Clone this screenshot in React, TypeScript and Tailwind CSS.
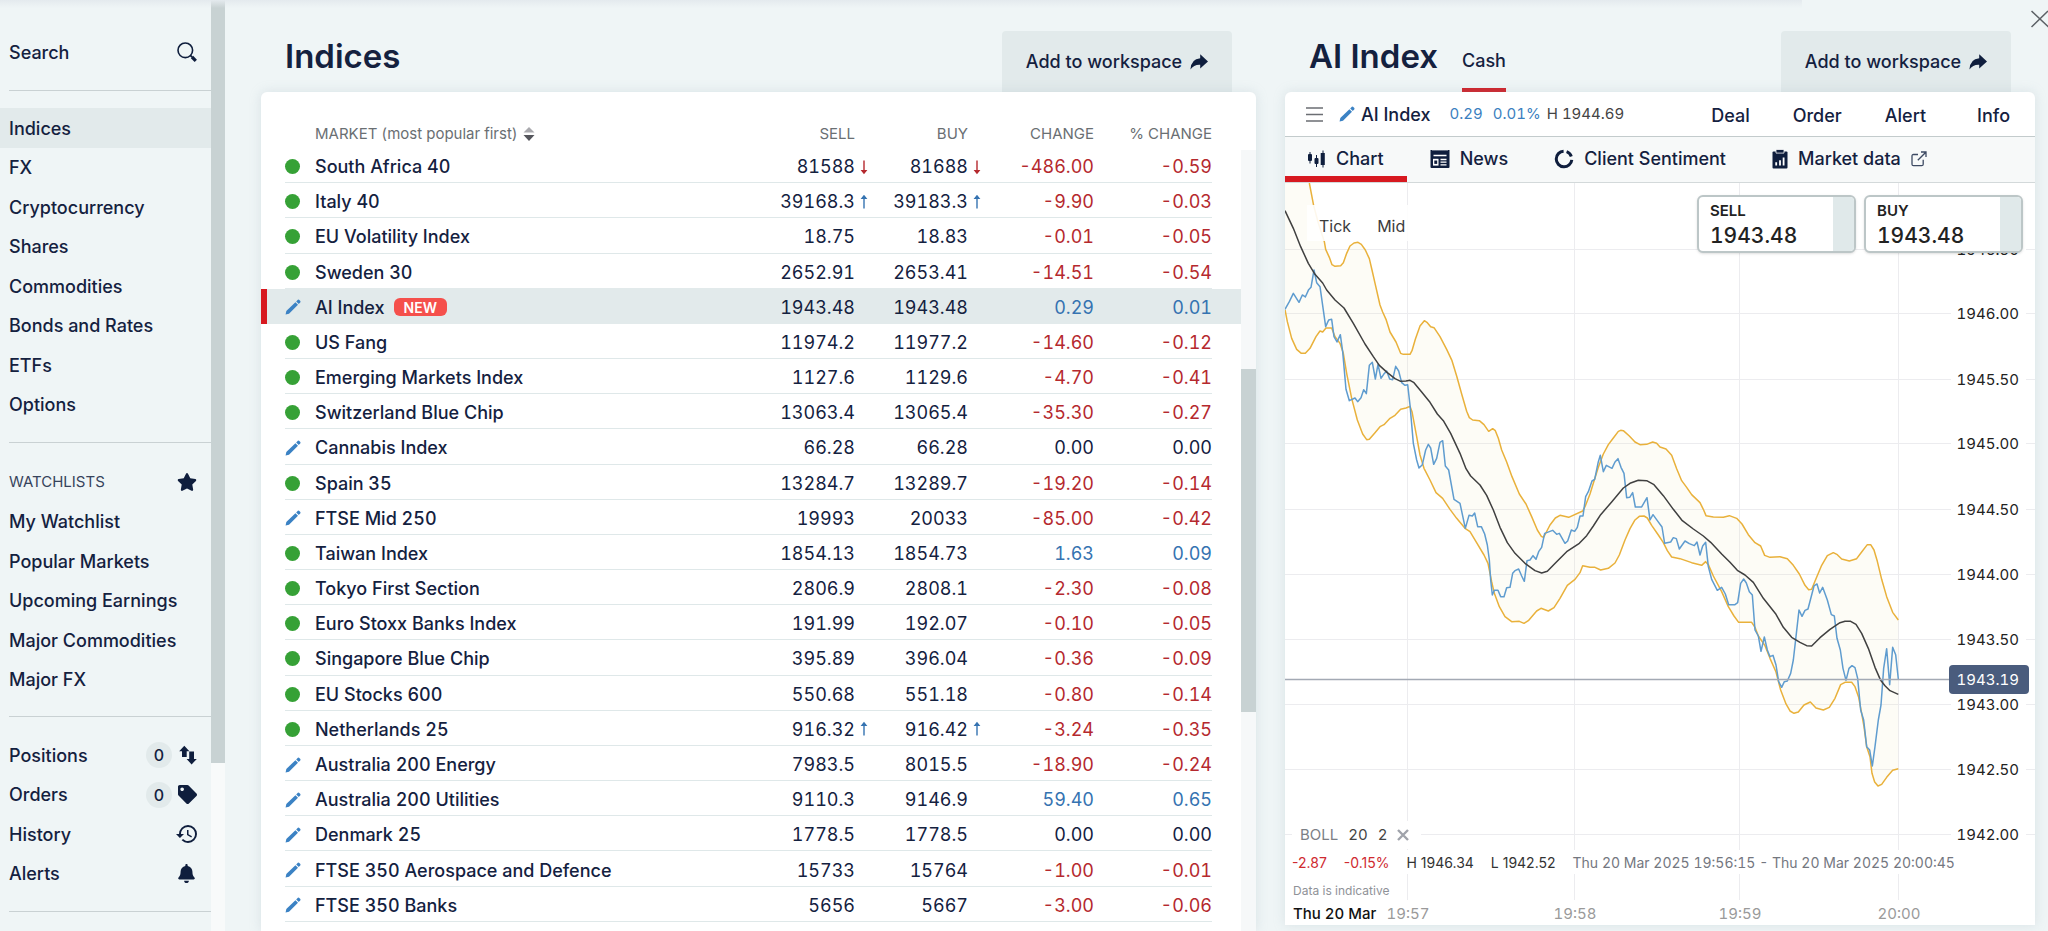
import type {ReactNode} from "react";
import clsx from "clsx";
import {FaBell, FaStar, FaTag} from "react-icons/fa";
import {MdHistory} from "react-icons/md";

type Market = {
    name: string;
    open: boolean;
    sell: string;
    buy: string;
    change: string;
    pct: string;
    move?: "up" | "down";
    isNew?: boolean;
};

const markets: Market[] = [
    {name: "South Africa 40", open: true, sell: "81588", buy: "81688", change: "-486.00", pct: "-0.59", move: "down"},
    {name: "Italy 40", open: true, sell: "39168.3", buy: "39183.3", change: "-9.90", pct: "-0.03", move: "up"},
    {name: "EU Volatility Index", open: true, sell: "18.75", buy: "18.83", change: "-0.01", pct: "-0.05"},
    {name: "Sweden 30", open: true, sell: "2652.91", buy: "2653.41", change: "-14.51", pct: "-0.54"},
    {name: "AI Index", open: false, sell: "1943.48", buy: "1943.48", change: "0.29", pct: "0.01", isNew: true},
    {name: "US Fang", open: true, sell: "11974.2", buy: "11977.2", change: "-14.60", pct: "-0.12"},
    {name: "Emerging Markets Index", open: true, sell: "1127.6", buy: "1129.6", change: "-4.70", pct: "-0.41"},
    {name: "Switzerland Blue Chip", open: true, sell: "13063.4", buy: "13065.4", change: "-35.30", pct: "-0.27"},
    {name: "Cannabis Index", open: false, sell: "66.28", buy: "66.28", change: "0.00", pct: "0.00"},
    {name: "Spain 35", open: true, sell: "13284.7", buy: "13289.7", change: "-19.20", pct: "-0.14"},
    {name: "FTSE Mid 250", open: false, sell: "19993", buy: "20033", change: "-85.00", pct: "-0.42"},
    {name: "Taiwan Index", open: true, sell: "1854.13", buy: "1854.73", change: "1.63", pct: "0.09"},
    {name: "Tokyo First Section", open: true, sell: "2806.9", buy: "2808.1", change: "-2.30", pct: "-0.08"},
    {name: "Euro Stoxx Banks Index", open: true, sell: "191.99", buy: "192.07", change: "-0.10", pct: "-0.05"},
    {name: "Singapore Blue Chip", open: true, sell: "395.89", buy: "396.04", change: "-0.36", pct: "-0.09"},
    {name: "EU Stocks 600", open: true, sell: "550.68", buy: "551.18", change: "-0.80", pct: "-0.14"},
    {name: "Netherlands 25", open: true, sell: "916.32", buy: "916.42", change: "-3.24", pct: "-0.35", move: "up"},
    {name: "Australia 200 Energy", open: false, sell: "7983.5", buy: "8015.5", change: "-18.90", pct: "-0.24"},
    {name: "Australia 200 Utilities", open: false, sell: "9110.3", buy: "9146.9", change: "59.40", pct: "0.65"},
    {name: "Denmark 25", open: false, sell: "1778.5", buy: "1778.5", change: "0.00", pct: "0.00"},
    {name: "FTSE 350 Aerospace and Defence", open: false, sell: "15733", buy: "15764", change: "-1.00", pct: "-0.01"},
    {name: "FTSE 350 Banks", open: false, sell: "5656", buy: "5667", change: "-3.00", pct: "-0.06"},
];

const categories = ["Indices", "FX", "Cryptocurrency", "Shares", "Commodities", "Bonds and Rates", "ETFs", "Options"];
const watchlists = ["My Watchlist", "Popular Markets", "Upcoming Earnings", "Major Commodities", "Major FX"];

function valueColor(value: string) {
    if (value.startsWith("-")) return "text-[#b5292e]";
    if (Number(value) > 0) return "text-[#3573b1]";
    return "";
}

function PencilIcon() {
    return (
        <svg viewBox="0 0 16 16" className="size-4 shrink-0" fill="#3b82c4">
            <path d="M0.6 15.4 1.3 11.9 10.4 3.2 13 5.8 4 14.7Z"/>
            <path d="M11.2 2.4 12.9 0.8Q13.6 0.3 14.3 0.9L15.3 1.9Q15.8 2.6 15.3 3.3L13.8 5Z"/>
        </svg>
    );
}

function SearchIcon() {
    return (
        <svg viewBox="0 0 20 20" className="size-5" fill="none" stroke="#0f1e3d">
            <circle cx="8.3" cy="8.3" r="7.3" strokeWidth="1.6"/>
            <path d="m13.6 13.6 1.6 1.6" strokeWidth="1.8"/>
            <path d="m15 15 3.8 3.8" strokeWidth="3.2"/>
        </svg>
    );
}

function ShareIcon() {
    return (
        <svg viewBox="0 0 18 16" className="h-4 w-[18px]" fill="#0f1e3d">
            <path d="M10.2.2 18 7.4l-7.8 7.2v-3.8Q4 10.4.4 15.6 1 4.8 10.2 4.2Z"/>
        </svg>
    );
}

function PositionsIcon() {
    return (
        <svg viewBox="0 0 18 20" className="h-5 w-[18px]" fill="#0f1e3d">
            <path d="M5.3.8 10.4 6.2H7.7V12H3V6.2H.2Z"/>
            <path d="M12.6 19.4 7.6 14h2.6V6.6h4.8V14h2.8Z"/>
        </svg>
    );
}

function CandlesIcon() {
    return (
        <svg viewBox="0 0 18 18" className="size-[18px]" fill="#0f1e3d">
            <path d="M1.5 2h1v2H3q1 0 1 1v5q0 1-1 1h-.5v2.5h-1V11H1q-1 0-1-1V5q0-1 1-1h.5z"/>
            <path d="M8 5h1v3h.5q1 0 1 1v4q0 1-1 1H9v3H8v-3h-.5q-1 0-1-1V9q0-1 1-1H8z"/>
            <path d="M14.5.5h1V3h1.3v12h-1.3v2.5h-1V15h-1.8V3h1.8z"/>
        </svg>
    );
}

function NewsIcon() {
    return (
        <svg viewBox="0 0 20 20" className="size-5" fill="#0f1e3d">
            <path d="M.5 1h1.5l1 .8L4 1l1 .8L6 1l1 .8L8 1l1 .8 1-.8 1 .8 1-.8 1 .8 1-.8 1 .8 1-.8 1 .8 1-.8h1.5v17q0 1-1 1h-17q-1 0-1-1z"/>
            <path d="M3.5 6.5h13M10.5 10.5h6M10.5 13.2h6M10.5 15.9h6" stroke="#fff" strokeWidth="1.3"/>
            <path d="M3 9.8h5.5v6.8H3z" fill="#fff"/>
            <path d="M4.3 11.5h2.9v3.4H4.3z"/>
        </svg>
    );
}

function SentimentIcon() {
    return (
        <svg viewBox="0 0 20 20" className="size-5" fill="none" stroke="#0f1e3d" strokeWidth="3">
            <path d="M9.6 2.2A7.8 7.8 0 1 0 17.8 10.8"/>
            <path d="M12.6 2.6A7.8 7.8 0 0 1 17.3 7.4"/>
        </svg>
    );
}

function MarketDataIcon() {
    return (
        <svg viewBox="0 0 16 20" className="h-5 w-4" fill="#0f1e3d">
            <path d="M1.5 2.5h13q1 0 1 1v15q0 1-1 1h-13q-1 0-1-1v-15q0-1 1-1z"/>
            <path d="M4 .5h8v3.6H4z" stroke="#f7f9f9" strokeWidth=".8"/>
            <path d="M4.2 16.5v-3.2M8 16.5v-5.2M11.6 16.5V8.6" stroke="#fff" strokeWidth="1.8"/>
        </svg>
    );
}

function ExternalIcon() {
    return (
        <svg viewBox="0 0 16 16" className="size-4" fill="none" stroke="#3d4a63" strokeWidth="1.3">
            <path d="M7 3.5H2.5Q1 3.5 1 5v8.2q0 1.5 1.5 1.5h8.2q1.5 0 1.5-1.5V8.8"/>
            <path d="M6.8 9.2 14.8 1.2M10 1h5v5"/>
        </svg>
    );
}

function Arrow({move}: { move?: "up" | "down" }) {
    return (
        <span className="flex w-4 justify-end pr-[2px]">
            {move && (
                <svg viewBox="0 0 10 16" className={clsx("h-4 w-[10px]", move === "down" && "rotate-180")}
                     fill={move === "up" ? "#3573b1" : "#b5292e"}>
                    <path d="M5 .8 8.4 5H5.7v9.5H4.3V5H1.6Z"/>
                </svg>
            )}
        </span>
    );
}

function NavItem({label, active, children}: { label: string; active?: boolean; children?: ReactNode }) {
    return (
        <a href="#" className={clsx("flex items-center justify-between pl-[9px] pr-3 pt-px", active && "bg-[#e2eaeb]")}>
            {label}
            {children && <span className="flex items-center gap-[2px]">{children}</span>}
        </a>
    );
}

function Count({value}: { value: number }) {
    return (
        <span className="flex size-[26px] items-center justify-center rounded-full bg-[#e2eaeb] text-base">{value}</span>
    );
}

function Sidebar() {
    return (
        <aside className="flex w-[225px] shrink-0 text-[18px] font-medium">
            <div className="flex-1">
                <div className="ml-[9px] flex h-[91px] items-center justify-between border-b border-[#c9d1d3] pr-[13px] pt-[14px]">
                    <input type="text" aria-label="Search" placeholder="Search"
                           className="w-36 outline-none placeholder:text-[#14213f]"/>
                    <button type="button" aria-label="Run search" className="mr-px"><SearchIcon/></button>
                </div>
                <nav className="mt-[17px] grid h-[316px] auto-rows-fr">
                    {categories.map((c) => <NavItem key={c} label={c} active={c === "Indices"}/>)}
                </nav>
                <div className="ml-[9px] mt-[18px] border-t border-[#c9d1d3]"/>
                <nav className="mt-[19px] grid h-[237px] auto-rows-fr">
                    <div className="flex items-center justify-between pl-[9px] pr-[14px] text-[15px] font-normal text-[#37435c]">
                        WATCHLISTS
                        <FaStar className="size-5 text-[#0f1e3d]"/>
                    </div>
                    {watchlists.map((w) => <NavItem key={w} label={w}/>)}
                </nav>
                <div className="ml-[9px] mt-[17px] border-t border-[#c9d1d3]"/>
                <nav className="mt-[18px] grid h-[158px] auto-rows-fr">
                    <NavItem label="Positions"><Count value={0}/><span className="w-[25px] pl-[5px]"><PositionsIcon/></span></NavItem>
                    <NavItem label="Orders"><Count value={0}/><span className="w-[25px] pl-1"><FaTag className="size-[19px] text-[#0f1e3d]"/></span></NavItem>
                    <NavItem label="History"><MdHistory className="size-6 text-[#0f1e3d]"/></NavItem>
                    <NavItem label="Alerts"><FaBell className="mr-[3px] size-[19px] text-[#0f1e3d]"/></NavItem>
                </nav>
                <div className="ml-[9px] mt-[18px] border-t border-[#c9d1d3]"/>
            </div>
            <div className="w-[14px] bg-[#f8fafa]">
                <div className="h-[82%] bg-[#c8d2d3]"/>
            </div>
        </aside>
    );
}

function WorkspaceButton() {
    return (
        <button type="button"
                className="flex h-[61px] w-[230px] items-center justify-center gap-2 rounded-t-sm bg-[#e2eaeb] text-[18px] font-medium">
            Add to workspace
            <ShareIcon/>
        </button>
    );
}

function MarketRow({market}: { market: Market }) {
    const line = clsx("border-b pt-[3px]", market.isNew || market.name === "Sweden 30" ? "border-[#e2eaeb]" : "border-[#dfe8e9]");
    return (
        <tr className={clsx(market.isNew && "bg-[#e2eaeb]")}>
            <td className={clsx(market.isNew && "border-l-[6px] border-[#d71920]")}/>
            <td className={line}>
                {market.open ? <span className="block size-[15px] rounded-full bg-[#36a136]"/> : <PencilIcon/>}
            </td>
            <td className={line}>
                <span className="flex items-center gap-[9px] font-medium">
                    {market.name}
                    {market.isNew && (
                        <span className="flex h-[18px] items-center rounded-md bg-[#f5504c] px-[10px] text-[14px] font-semibold text-white">NEW</span>
                    )}
                </span>
            </td>
            <td className={line}>
                <span className="flex items-center justify-end">{market.sell}<Arrow move={market.move}/></span>
            </td>
            <td className={line}>
                <span className="flex items-center justify-end">{market.buy}<Arrow move={market.move}/></span>
            </td>
            <td className={clsx(line, "text-right", valueColor(market.change))}>{market.change}</td>
            <td className={clsx(line, "text-right", valueColor(market.pct))}>{market.pct}</td>
            <td/>
        </tr>
    );
}

function MarketList() {
    return (
        <section className="flex min-w-0 flex-col">
            <header className="flex h-[92px] shrink-0 items-end justify-between pl-6 pr-6">
                <h1 className="pb-[14px] text-[33px] font-semibold leading-[44px]">Indices</h1>
                <WorkspaceButton/>
            </header>
            <div className="flex min-h-0 flex-1 overflow-hidden rounded-t-md bg-white shadow-[0_0_12px_rgba(150,170,185,0.25)]">
                <div className="min-w-0 flex-1">
                    <table className="h-[830px] w-full table-fixed border-separate border-spacing-0 text-[18px] tabular-nums">
                        <colgroup>
                            <col className="w-6"/>
                            <col className="w-[30px]"/>
                            <col/>
                            <col className="w-[130px]"/>
                            <col className="w-[113px]"/>
                            <col className="w-[110px]"/>
                            <col className="w-[118px]"/>
                            <col className="w-[29px]"/>
                        </colgroup>
                        <thead className="h-14 text-[15px] text-[#6a6f73]">
                            <tr>
                                <th/>
                                <th/>
                                <th className="pt-7 text-left font-normal">
                                    <button type="button" className="flex items-center gap-[5px]">
                                        MARKET (most popular first)
                                        <svg viewBox="0 0 12 14" className="h-[14px] w-3">
                                            <path d="M6 0 11.5 5.6H.5Z" fill="#a9a9ae"/>
                                            <path d="M6 14 11.5 8H.5Z" fill="#55565c"/>
                                        </svg>
                                    </button>
                                </th>
                                <th className="pr-4 pt-7 text-right font-normal">SELL</th>
                                <th className="pr-4 pt-7 text-right font-normal">BUY</th>
                                <th className="pt-7 text-right font-normal">CHANGE</th>
                                <th className="pt-7 text-right font-normal">% CHANGE</th>
                                <th/>
                            </tr>
                        </thead>
                        <tbody>
                            {markets.map((m) => <MarketRow key={m.name} market={m}/>)}
                        </tbody>
                    </table>
                </div>
                <div className="mt-[58px] flex w-[15px] flex-col bg-[#f6f8f9]">
                    <div className="flex-[28]"/>
                    <div className="flex-[44] bg-[#c8d2d3]"/>
                    <div className="flex-[28]"/>
                </div>
            </div>
        </section>
    );
}

// Series are sampled at three units per chart pixel
const upper = "73,0 86,68 100,120 118,176 122,199 133,223 141,245 150,250 167,248 175,239 185,211 195,189 207,180 219,178 229,184 241,201 253,227 261,261 271,305 285,366 293,387 303,409 315,447 333,477 347,511 355,514 375,514 381,503 391,469 405,429 418,413 427,419 437,431 447,434 465,461 485,499 501,533 515,579 530,633 545,685 553,704 563,711 583,713 597,725 611,745 623,737 631,743 640,766 650,801 665,837 681,881 703,933 723,963 740,1001 757,1041 769,1060 775,1063 781,1053 795,1026 811,1005 825,997 851,1003 893,984 900,971 915,933 928,891 940,853 955,813 970,785 985,765 1000,745 1007,742 1015,743 1033,759 1050,777 1065,785 1085,784 1103,777 1115,781 1125,792 1143,798 1160,817 1175,857 1190,893 1205,913 1220,935 1245,959 1255,979 1263,998 1285,1002 1315,1003 1333,998 1355,1006 1371,1023 1390,1055 1410,1079 1427,1089 1439,1117 1455,1123 1485,1121 1507,1127 1525,1147 1543,1173 1560,1207 1571,1220 1580,1219 1593,1187 1610,1147 1627,1118 1645,1109 1657,1115 1670,1128 1693,1134 1715,1127 1730,1107 1747,1085 1757,1085 1767,1101 1777,1135 1790,1189 1805,1241 1823,1288 1840,1311";

const lower = "0,380 7,416 20,466 35,499 49,511 61,511 75,496 93,461 105,444 113,447 123,435 140,435 150,461 165,481 175,511 185,571 200,646 217,711 233,753 245,770 253,769 270,749 285,731 297,725 315,706 330,697 347,679 363,675 375,670 381,686 395,761 405,816 417,856 435,891 453,929 473,946 495,979 515,1006 540,1036 555,1046 573,1076 597,1116 609,1141 620,1196 628,1231 643,1271 660,1301 680,1316 703,1315 717,1321 730,1313 755,1284 768,1276 790,1284 807,1274 825,1246 847,1207 870,1189 885,1169 893,1148 915,1153 930,1153 947,1161 970,1156 990,1140 1003,1116 1020,1071 1035,1037 1050,1011 1063,1000 1077,999 1087,1005 1100,1027 1120,1056 1135,1079 1147,1103 1160,1122 1185,1127 1220,1139 1250,1147 1262,1136 1270,1145 1285,1179 1310,1226 1330,1271 1347,1299 1361,1318 1400,1318 1410,1333 1420,1359 1440,1388 1455,1426 1473,1467 1487,1521 1503,1563 1515,1584 1527,1591 1540,1587 1557,1566 1576,1557 1593,1575 1615,1581 1633,1573 1650,1546 1667,1505 1680,1498 1700,1498 1710,1511 1721,1543 1730,1591 1737,1631 1745,1691 1755,1721 1761,1771 1769,1797 1779,1809 1790,1804 1805,1783 1823,1762 1840,1757";

const average = "0,83 25,136 47,191 70,241 90,274 113,300 125,321 150,351 177,375 205,421 240,483 265,521 283,547 307,569 330,587 347,595 363,594 375,592 387,599 410,627 435,658 457,693 475,713 497,751 525,811 543,857 557,879 585,906 605,937 625,981 645,1033 667,1079 690,1111 720,1141 750,1163 770,1170 787,1165 815,1136 845,1106 883,1081 905,1058 925,1029 947,995 980,957 1015,915 1035,901 1060,892 1085,893 1107,905 1135,938 1165,979 1192,1013 1225,1038 1255,1059 1277,1078 1310,1113 1335,1138 1357,1162 1380,1176 1405,1198 1435,1246 1473,1294 1495,1333 1520,1363 1545,1378 1565,1388 1580,1389 1605,1364 1635,1339 1665,1319 1680,1315 1697,1315 1713,1324 1730,1351 1750,1396 1770,1453 1787,1492 1800,1508 1815,1523 1840,1534";

const price = "0,379 13,356 25,331 42,358 52,336 61,342 71,320 78,313 87,261 95,299 105,311 122,431 131,411 140,409 147,461 156,477 166,455 173,506 183,619 193,653 210,645 218,656 228,644 236,620 244,632 253,547 262,538 271,588 279,544 288,586 296,574 305,564 314,588 323,590 332,550 341,564 350,599 360,607 368,605 375,666 385,781 395,831 402,855 412,845 422,801 430,784 437,795 446,844 455,826 465,778 473,773 481,849 491,861 507,949 525,961 541,1036 552,997 562,999 569,990 578,1031 589,1031 599,1053 607,1086 613,1131 617,1191 622,1236 628,1222 639,1222 647,1241 657,1241 665,1214 675,1213 683,1171 690,1163 701,1158 710,1179 718,1195 726,1133 735,1131 744,1118 753,1129 761,1106 770,1093 779,1051 803,1042 815,1054 823,1051 840,1081 848,1074 859,1041 869,1045 877,1033 885,999 894,999 902,941 910,926 921,894 929,889 940,836 946,817 955,866 964,847 981,856 990,837 999,827 1008,853 1017,871 1025,944 1034,943 1043,929 1051,972 1070,972 1086,944 1095,1011 1104,995 1117,1013 1131,1032 1139,1081 1157,1077 1165,1064 1174,1067 1183,1098 1200,1074 1213,1082 1228,1088 1236,1077 1245,1116 1253,1089 1262,1078 1270,1151 1280,1189 1297,1222 1310,1213 1321,1233 1331,1265 1350,1265 1358,1259 1367,1201 1376,1188 1384,1200 1393,1226 1402,1236 1410,1341 1420,1359 1428,1405 1438,1362 1447,1401 1455,1421 1464,1417 1473,1446 1481,1496 1490,1513 1498,1496 1507,1494 1517,1471 1525,1431 1533,1361 1542,1281 1551,1300 1560,1282 1569,1278 1587,1209 1596,1203 1604,1230 1613,1213 1627,1251 1639,1295 1648,1299 1656,1366 1666,1401 1674,1456 1683,1492 1692,1456 1701,1448 1710,1454 1718,1486 1727,1581 1736,1611 1745,1691 1754,1701 1762,1749 1770,1691 1780,1611 1788,1566 1796,1456 1805,1397 1814,1505 1823,1393 1832,1415 1840,1488";

const priceTicks = [
    {y: 66, label: "1946.50"},
    {y: 130, label: "1946.00"},
    {y: 196, label: "1945.50"},
    {y: 260, label: "1945.00"},
    {y: 326, label: "1944.50"},
    {y: 391, label: "1944.00"},
    {y: 456, label: "1943.50"},
    {y: 521, label: "1943.00"},
    {y: 586, label: "1942.50"},
    {y: 651, label: "1942.00"},
];

const timeTicks = [
    {x: 122, label: "19:57"},
    {x: 289, label: "19:58"},
    {x: 454, label: "19:59"},
    {x: 613, label: "20:00"},
];

function PriceChart() {
    const lowerReversed = lower.split(" ").reverse().join(" ");
    return (
        <svg viewBox="0 0 750 742" className="block w-full tabular-nums" fontSize="15">
            {priceTicks.map((t) => (
                <g key={t.label}>
                    <path d={`M0 ${t.y + 0.5}H750`} stroke="#ececef"/>
                    <rect x="666" y={t.y - 10} width="75" height="20" fill="#fff"/>
                </g>
            ))}
            {timeTicks.map((t) => <path key={t.label} d={`M${t.x + 0.5} 0V717`} stroke="#ececef"/>)}
            <g transform="scale(0.33333)" fill="none" strokeWidth="4.5" strokeLinejoin="round">
                <polygon points={`0,-300 ${upper} ${lowerReversed}`} fill="#efe7be" fillOpacity="0.14"/>
                <polyline points={upper} stroke="#e9b13b"/>
                <polyline points={lower} stroke="#e9b13b"/>
                <polyline points={price} stroke="#5f9ccf"/>
                <polyline points={average} stroke="#404040"/>
            </g>
            <path d="M0 496.5H666" stroke="#a3a9b4" strokeWidth="1.5"/>
            {priceTicks.map((t) => (
                <text key={t.label} x="734" y={t.y + 6} textAnchor="end" fill="#222">{t.label}</text>
            ))}
            <rect x="664" y="482" width="80" height="29" rx="4" fill="#4a5c7d"/>
            <text x="734" y="502" textAnchor="end" fill="#fff">1943.19</text>
            {timeTicks.map((t) => (
                <text key={t.label} x={t.x + 1} y="736" textAnchor="middle" fill="#9a9a9a">{t.label}</text>
            ))}
            <text x="8" y="736" fontWeight="500" fill="#111">Thu 20 Mar</text>
        </svg>
    );
}

function DealTicket({side, quote}: { side: string; quote: string }) {
    return (
        <button type="button"
                className="flex h-[58px] w-[159px] justify-between overflow-hidden rounded-md border-2 border-[#bcc6c7] bg-white text-left text-[#222] shadow-sm">
            <span className="flex flex-col pl-[11px] pt-1">
                <span className="text-[15px] font-semibold leading-[20px]">{side}</span>
                <span className="text-[21px] font-medium leading-[30px] tabular-nums">{quote}</span>
            </span>
            <span className="w-[21px] self-stretch bg-[#e0e9ea]"/>
        </button>
    );
}

function Tab({label, icon, active, children}: { label: string; icon: ReactNode; active?: boolean; children?: ReactNode }) {
    return (
        <button type="button"
                className={clsx("flex h-full items-center gap-[10px] border-b-[6px] px-[23px] pt-1", active ? "border-[#d71920]" : "border-transparent")}>
            {icon}
            {label}
            {children}
        </button>
    );
}

function MarketPanel() {
    return (
        <section className="flex min-w-0 flex-col">
            <header className="flex h-[92px] shrink-0 items-end justify-between pl-6 pr-6">
                <div className="flex items-end gap-6">
                    <h1 className="pb-[14px] text-[33px] font-semibold leading-[44px]">AI Index</h1>
                    <button type="button" className="border-b-4 border-[#cf2027] pb-[15px] text-[18px] font-medium leading-6">Cash</button>
                </div>
                <WorkspaceButton/>
            </header>
            <div className="rounded-t-md bg-white shadow-[0_0_12px_rgba(150,170,185,0.25)]">
                <div className="flex h-[45px] items-center justify-between border-b border-[#c3cbcc] pl-[21px] pr-[25px] text-[18px] font-medium">
                    <div className="flex items-center">
                        <button type="button" aria-label="Menu" className="mr-4">
                            <svg viewBox="0 0 17 15" className="h-[15px] w-[17px]" stroke="#6b6e73" strokeWidth="1.5">
                                <path d="M0 1h17M0 7.5h17M0 14h17"/>
                            </svg>
                        </button>
                        <PencilIcon/>
                        <span className="ml-[6px]">AI Index</span>
                        <span className="ml-[19px] flex gap-[10px] text-[15px] font-normal tabular-nums text-[#3b7fc0]">
                            <span>0.29</span>
                            <span>0.01%</span>
                        </span>
                        <span className="ml-[6px] text-[15px] font-normal tabular-nums text-[#444]">H 1944.69</span>
                    </div>
                    <div className="flex pt-[2px]">
                        <button type="button" className="mr-[43px]">Deal</button>
                        <button type="button" className="mr-[43px]">Order</button>
                        <button type="button" className="mr-[51px]">Alert</button>
                        <button type="button">Info</button>
                    </div>
                </div>
                <div className="flex h-[46px] border-b border-[#d3d9da] bg-[#f7f9f9] text-[18px] font-medium">
                    <Tab label="Chart" active icon={<CandlesIcon/>}/>
                    <Tab label="News" icon={<NewsIcon/>}/>
                    <Tab label="Client Sentiment" icon={<SentimentIcon/>}/>
                    <Tab label="Market data" icon={<MarketDataIcon/>}><ExternalIcon/></Tab>
                </div>
                <div className="relative">
                    <PriceChart/>
                    <div className="absolute left-[22px] top-[22px] flex h-9 items-center gap-[26px] bg-white/90 pl-3 pr-1 pt-[6px] text-base text-[#3c3c3c]">
                        <button type="button">Tick</button>
                        <button type="button">Mid</button>
                    </div>
                    <div className="absolute right-3 top-3 flex gap-2">
                        <DealTicket side="SELL" quote="1943.48"/>
                        <DealTicket side="BUY" quote="1943.48"/>
                    </div>
                    <div className="absolute bottom-[76px] left-[7px] flex h-7 items-center gap-[10px] bg-white pl-2 pr-3 text-[15px] tabular-nums text-[#444]">
                        <span className="text-[#7c7f86]">BOLL</span>
                        <span>20</span>
                        <span>2</span>
                        <button type="button" aria-label="Remove BOLL">
                            <svg viewBox="0 0 12 12" className="size-3" stroke="#a0a3ab" strokeWidth="2.4">
                                <path d="m1 1 10 10M11 1 1 11"/>
                            </svg>
                        </button>
                    </div>
                    <div className="absolute bottom-[51px] left-0 flex h-6 items-center gap-[17px] bg-white pl-[7px] text-[14px] text-[#333]">
                        <span className="text-[#cf2a30]">-2.87</span>
                        <span className="text-[#cf2a30]">-0.15%</span>
                        <span>H 1946.34</span>
                        <span>L 1942.52</span>
                        <span className="tabular-nums text-[#74777f]">Thu 20 Mar 2025 19:56:15 - Thu 20 Mar 2025 20:00:45</span>
                    </div>
                    <div className="absolute bottom-[26px] left-2 text-xs leading-4 text-[#8f9298]">Data is indicative</div>
                </div>
            </div>
        </section>
    );
}

export default function App() {
    return (
        <div className="relative flex h-screen overflow-hidden bg-[#eff5f6] font-['Inter','Liberation_Sans',sans-serif] text-[#14213f]">
            <div className="absolute left-0 top-0 h-2 w-[88%] bg-linear-to-b from-[#e4eaee] to-transparent"/>
            <Sidebar/>
            <main className="grid min-w-0 flex-1 grid-cols-[995fr_750fr] gap-[29px] pl-9 pr-[13px]">
                <MarketList/>
                <MarketPanel/>
            </main>
            <button type="button" aria-label="Close" className="absolute right-0 top-[10px]">
                <svg viewBox="0 0 17 18" className="h-[18px] w-[17px]" stroke="#5c6166" strokeWidth="1.5">
                    <path d="m0.5 1 17 16M17 1 0.5 17"/>
                </svg>
            </button>
        </div>
    );
}
